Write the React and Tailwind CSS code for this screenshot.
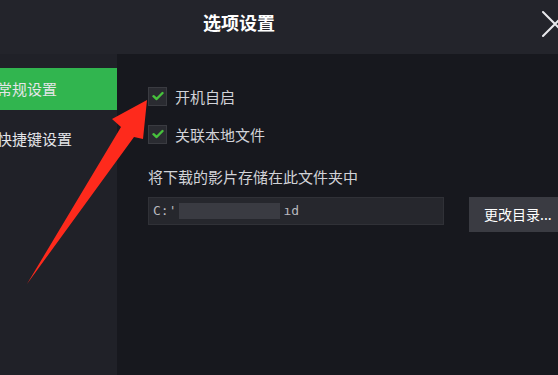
import { useState } from 'react';

const font = { fontFamily: '"Noto Sans CJK SC", "Noto Sans", sans-serif' };

const Check = ({ checked, onClick, label }) => (
  <div className="flex items-center h-[20px] cursor-pointer" onClick={onClick}>
    <div className="w-[19px] h-[19px] shrink-0 bg-[#2a2b31] border border-[#3a3b41] flex items-center justify-center">
      {checked && (
        <svg width="12" height="10" viewBox="0 0 12 10">
          <path d="M1.5 5.2 L4.6 8 L10.5 2" fill="none" stroke="#47c23c" strokeWidth="2.4" strokeLinecap="round" strokeLinejoin="round" />
        </svg>
      )}
    </div>
    <span className="ml-[8px] text-[15px] text-[#d2d3d8] leading-none">{label}</span>
  </div>
);

const App = () => {
  const [tab, setTab] = useState(0);
  const [autoStart, setAutoStart] = useState(true);
  const [assoc, setAssoc] = useState(true);

  return (
    <div className="w-[558px] h-[375px] overflow-hidden relative flex flex-col bg-[#17181e]" style={font}>
      {/* title bar */}
      <div className="h-[54px] shrink-0 bg-[#23242b] flex items-center relative">
        <div className="pl-[203px] pb-[10px] text-[18px] font-bold text-white">选项设置</div>
        <svg className="absolute left-[541px] top-[10px]" width="28" height="28" viewBox="0 0 28 28">
          <path d="M2 2 L26 26 M26 2 L2 26" stroke="#e8e8ec" strokeWidth="2" strokeLinecap="round" />
        </svg>
      </div>

      <div className="flex flex-1 min-h-0">
        {/* sidebar */}
        <div className="w-[117px] shrink-0 bg-[#202128] pt-[14px] flex flex-col overflow-hidden">
          {['常规设置', '快捷键设置'].map((t, i) => (
            <div
              key={t}
              onClick={() => setTab(i)}
              className={`h-[42px] flex items-center cursor-pointer ${i === 1 ? 'mt-[8px]' : ''} ${tab === i ? 'bg-[#31b54f]' : ''}`}
            >
              <span className="-ml-[3px] text-[15px] text-[#e4e5e8] whitespace-nowrap">{t}</span>
            </div>
          ))}
        </div>

        {/* main */}
        <div className="flex-1 min-w-0 overflow-hidden pl-[31px] pt-[32px] flex flex-col">
          <Check checked={autoStart} onClick={() => setAutoStart(!autoStart)} label="开机自启" />
          <div className="mt-[18px]">
            <Check checked={assoc} onClick={() => setAssoc(!assoc)} label="关联本地文件" />
          </div>
          <div className="mt-[25px] text-[15px] text-[#d2d3d8] leading-none whitespace-nowrap">将下载的影片存储在此文件夹中</div>
          <div className="mt-[13px] flex items-start">
            <div className="w-[296px] h-[28px] shrink-0 bg-[#26272d] border border-[#303137] flex items-center pl-[4px] text-[13px] text-[#b8b9be]" style={{ fontFamily: '"DejaVu Sans Mono", monospace' }}>
              <span>C:'</span>
              <span className="ml-[3px] w-[101px] h-[16px] bg-[#3a3b42]" />
              <span className="ml-[3px]">ıd</span>
            </div>
            <button className="ml-[25px] w-[100px] h-[35px] shrink-0 bg-[#3a3b42] text-white text-[14px] text-left pl-[15px] whitespace-nowrap">
              更改目录...
            </button>
          </div>
        </div>
      </div>

      {/* red annotation arrow */}
      <svg className="absolute left-0 top-0 pointer-events-none" width="558" height="375" viewBox="0 0 558 375">
        <polygon points="147,100 143,139 134,137 27,284 121,127 112,119" fill="#fe2a1c" />
      </svg>
    </div>
  );
};

export default App;
